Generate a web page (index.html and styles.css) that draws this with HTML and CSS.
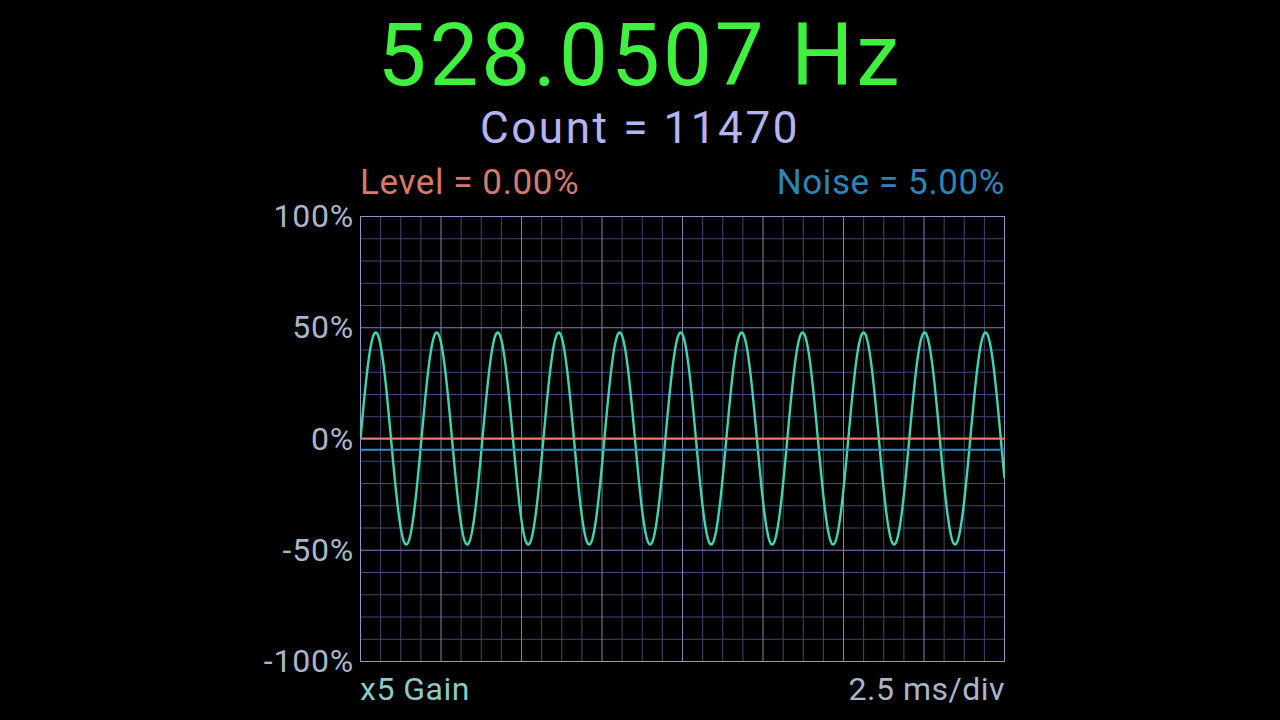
FILE: index.html
```html
<!DOCTYPE html>
<html lang="en">
<head>
    <meta charset="UTF-8">
    <meta name="viewport" content="width=device-width, initial-scale=1.0">
    <title>Frequency Counter</title>
    <link rel="stylesheet" href="styles.css">
</head>
<body>

    <div class="readout">
        <div class="freq">528.0507 Hz</div>
        <div class="count">Count = 11470</div>
    </div>

    <div class="scope">
        <div class="legend">
            <span class="level">Level = 0.00%</span>
            <span class="noise">Noise = 5.00%</span>
        </div>

        <div class="axis">
            <span>100%</span>
            <span>50%</span>
            <span>0%</span>
            <span>-50%</span>
            <span>-100%</span>
        </div>

        <svg id="plot" class="plot" width="645" height="446" viewBox="0 0 645 446"></svg>

        <div class="footer">
            <span class="gain">x5 Gain</span>
            <span class="timebase">2.5 ms/div</span>
        </div>
    </div>

    <script>
        const NS = 'http://www.w3.org/2000/svg';
        const plot = document.getElementById('plot');
        const W = 644, H = 445; // drawing area, half pixel offset for sharp lines

        function addLine(x1, y1, x2, y2, cls) {
            const l = document.createElementNS(NS, 'line');
            l.setAttribute('x1', x1);
            l.setAttribute('y1', y1);
            l.setAttribute('x2', x2);
            l.setAttribute('y2', y2);
            l.setAttribute('class', cls);
            plot.appendChild(l);
        }

        // 8 x 4 divisions, 4 minor steps across and 5 down
        for (let pass = 0; pass < 2; pass++) {
            for (let i = 1; i < 32; i++) {
                if ((i % 4 === 0) === (pass === 1)) {
                    const x = 0.5 + i * W / 32;
                    addLine(x, 0.5, x, H + 0.5, pass ? 'major' : 'minor');
                }
            }
            for (let j = 1; j < 20; j++) {
                if ((j % 5 === 0) === (pass === 1)) {
                    const y = 0.5 + j * H / 20;
                    addLine(0.5, y, W + 0.5, y, pass ? 'major' : 'minor');
                }
            }
        }

        const frame = document.createElementNS(NS, 'rect');
        frame.setAttribute('x', 0.5);
        frame.setAttribute('y', 0.5);
        frame.setAttribute('width', W);
        frame.setAttribute('height', H);
        frame.setAttribute('class', 'frame');
        plot.appendChild(frame);

        // input signal: 528 Hz over 20 ms (2.5 ms/div)
        const cycles = 528.0507 * 0.02;
        const mid = H / 2;
        const amp = 106;
        let d = '';
        for (let x = 0; x <= W; x += 0.5) {
            const y = mid - amp * Math.sin(2 * Math.PI * cycles * x / W);
            d += (x === 0 ? 'M' : 'L') + (x + 0.5).toFixed(2) + ' ' + y.toFixed(2) + ' ';
        }
        const wave = document.createElementNS(NS, 'path');
        wave.setAttribute('d', d);
        wave.setAttribute('class', 'wave');
        plot.appendChild(wave);

        // trigger level and noise threshold
        addLine(0.5, mid, W + 0.5, mid, 'level-line');
        const noiseY = mid + 0.05 * H / 2;
        addLine(0.5, noiseY, W + 0.5, noiseY, 'noise-line');
    </script>

</body>
</html>
```

FILE: styles.css
```css
body {
    margin: 0;
    padding: 0;
    height: 100vh;
    background-color: #000;
    font-family: Roboto, "Noto Sans", sans-serif;
    overflow: hidden;
}
.readout {
    text-align: center;
}
.freq {
    margin-top: 12px;
    font-size: 87px;
    line-height: 87px;
    letter-spacing: 3px;
    color: #3ff03f;
}
.count {
    margin-top: 7px;
    font-size: 44px;
    line-height: 44px;
    letter-spacing: 2.6px;
    color: #b4b4f2;
}
.scope {
    display: grid;
    grid-template-columns: 100px 645px 15px;
    justify-content: center;
}
.legend {
    grid-column: 2;
    display: flex;
    justify-content: space-between;
    margin-top: 13px;
    margin-bottom: 13px;
    font-size: 35px;
    line-height: 40px;
    letter-spacing: 0.6px;
}
.level {
    color: #d67a6c;
}
.noise {
    color: #2b86b8;
}
.axis {
    grid-column: 1;
    grid-row: 2;
    display: flex;
    flex-direction: column;
    justify-content: space-between;
    align-items: flex-end;
    height: 481px;
    margin: -18px 0;
    padding-right: 6px;
    font-size: 32px;
    line-height: 36px;
    letter-spacing: 0.8px;
    color: #a9b6ca;
}
.plot {
    grid-column: 2;
    grid-row: 2;
    display: block;
}
.plot .minor {
    stroke: #46466e;
    stroke-width: 1;
}
.plot .major {
    stroke: #8282b4;
    stroke-width: 1;
}
.plot .frame {
    fill: none;
    stroke: #9494c8;
    stroke-width: 1;
}
.plot .wave {
    fill: none;
    stroke: #3ed6b2;
    stroke-width: 2.4;
    stroke-linejoin: round;
}
.plot .level-line {
    stroke: #e07c72;
    stroke-width: 2;
}
.plot .noise-line {
    stroke: #2f8ec4;
    stroke-width: 2;
}
.footer {
    grid-column: 2;
    display: flex;
    justify-content: space-between;
    margin-top: 9px;
    font-size: 32px;
    line-height: 36px;
    letter-spacing: 0.5px;
}
.gain {
    color: #8ccac2;
}
.timebase {
    color: #a9b6ca;
}
```
